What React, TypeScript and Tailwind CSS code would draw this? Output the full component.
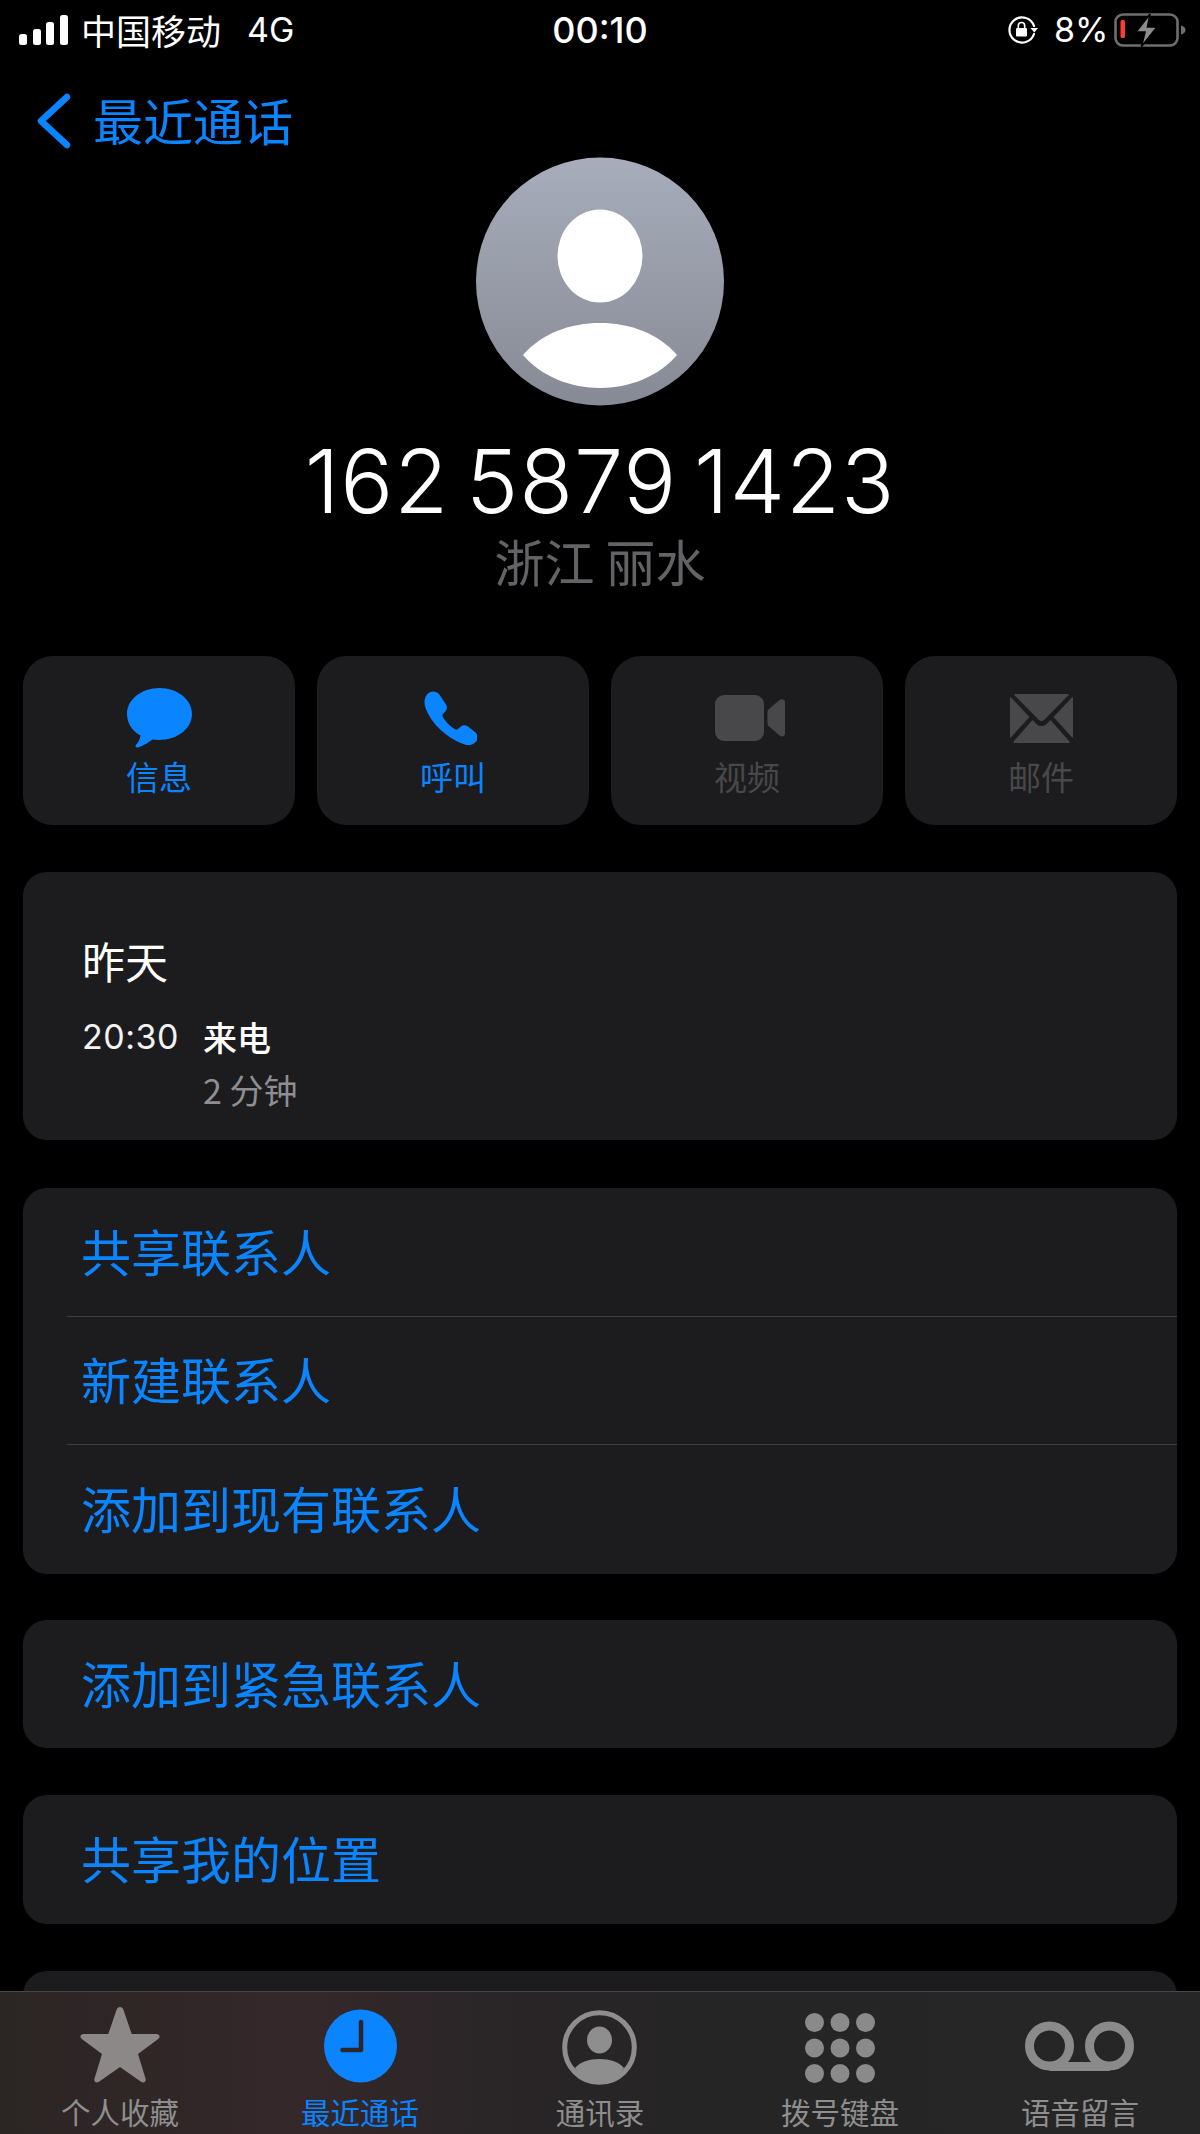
const blue = "#0a84ff";

function StatusBar() {
  return (
    <div className="h-[60px] flex items-center text-white text-[35px] font-['Noto_Sans_CJK_SC',sans-serif] font-normal">
      <div className="w-[497px] flex items-center">
        <svg className="ml-[19px]" width="51" height="32" viewBox="0 0 51 32" fill="#fff">
          <rect x="0" y="20" width="8" height="11" rx="2.5" />
          <rect x="14" y="15" width="8" height="16" rx="2.5" />
          <rect x="27" y="8" width="8" height="23" rx="2.5" />
          <rect x="41" y="1" width="8" height="30" rx="2.5" />
        </svg>
        <span className="ml-[11px] mb-[2px] leading-none">中国移动</span>
        <span className="ml-[26px] leading-none font-['Inter',sans-serif] font-normal text-[34px]">4G</span>
      </div>
      <div className="w-[206px] text-center font-['Inter',sans-serif] font-medium text-[36px] leading-none">00:10</div>
      <div className="flex-1 flex items-center">
        <svg className="ml-[304px]" width="32" height="28" viewBox="0 0 32 28" fill="none" stroke="#fff" strokeWidth="2.2">
          <path d="M27 10a12.6 12.6 0 1 0 0 8" strokeLinecap="round" />
          <path d="M23.5 12h7.5l-3.7 4.6z" fill="#fff" stroke="none" />
          <rect x="9" y="12" width="11" height="8.5" rx="1.2" fill="#fff" stroke="none" />
          <path d="M11.3 12V9.7a3.2 3.2 0 0 1 6.4 0V12" strokeWidth="1.6" />
        </svg>
        <span className="ml-[15px] font-['Inter',sans-serif] font-normal text-[34px] leading-none">8%</span>
        <svg className="ml-[6px]" width="73" height="34" viewBox="0 0 73 34">
          <rect x="1.5" y="1.5" width="62" height="31" rx="7.5" fill="none" stroke="#6e6e6e" strokeWidth="2.6" />
          <rect x="6.5" y="7" width="4.5" height="18" rx="1.5" fill="#ff3b30" />
          <path d="M67 12.5c3 .8 4.5 2.4 4.5 4.5S70 20.7 67 21.5z" fill="#6e6e6e" />
          <path d="M36 1 22 19h9l-3.5 14.5L43 14h-9.5z" fill="#8b8b8b" stroke="#000" strokeWidth="1.6" />
        </svg>
      </div>
    </div>
  );
}

function NavBar() {
  return (
    <div className="mt-[30px] h-[62px] flex items-center">
      <svg className="ml-[36px]" width="36" height="56" viewBox="0 0 36 56" fill="none" stroke={blue} strokeWidth="6.5" strokeLinecap="round" strokeLinejoin="round">
        <path d="M31 4 5 28l26 24" />
      </svg>
      <span className="ml-[21px] mb-[4px] text-[50px] leading-none font-normal text-[#0a84ff] font-['Noto_Sans_CJK_SC',sans-serif]">最近通话</span>
    </div>
  );
}

function Header() {
  return (
    <div className="flex flex-col items-center">
      <svg className="mt-[5px]" width="248" height="249" viewBox="0 0 248 249">
        <defs>
          <linearGradient id="avatar" x1="0" y1="0" x2="0" y2="1">
            <stop offset="0" stopColor="#a7adbb" />
            <stop offset="1" stopColor="#868a94" />
          </linearGradient>
        </defs>
        <circle cx="124" cy="124.5" r="124" fill="url(#avatar)" />
        <ellipse cx="124" cy="99" rx="42.5" ry="46.5" fill="#fff" />
        <path d="M47 198C66 176 95 166 124 166S182 176 201 198C182 220 153 231 124 231S66 220 47 198Z" fill="#fff" />
      </svg>
      <div className="mt-[27px] h-[96px] text-[88px] leading-[96px] font-['Inter',sans-serif] font-[350] tracking-[1px] [word-spacing:-9px] text-white">162 5879 1423</div>
      <div className="mt-[1px] text-[50px] leading-[60px] font-normal text-[#636366] font-['Noto_Sans_CJK_SC',sans-serif]">浙江 丽水</div>
    </div>
  );
}

function ActionCard({ label, on, children }: { label: string; on?: boolean; children: React.ReactNode }) {
  return (
    <div className="h-[169px] rounded-[30px] bg-[#1c1c1e] flex flex-col items-center">
      <div className="h-[100px] w-full flex items-end justify-center">{children}</div>
      <div className={`text-[33px] leading-[40px] font-normal font-['Noto_Sans_CJK_SC',sans-serif] ${on ? "text-[#0a84ff]" : "text-[#48484a]"}`}>{label}</div>
    </div>
  );
}

function Actions() {
  return (
    <div className="mt-[66px] mx-[23px] grid grid-cols-4 gap-[22px]">
      <ActionCard label="信息" on>
        <svg width="65" height="60" viewBox="0 0 65 60" fill={blue} className="mb-[8px]">
          <path d="M32.5 0C50.5 0 65 11.5 65 26S50.5 52 32 52c-2.500 0-4.500-.2-6.500-.5C20 55.500 14 59 10.500 59.500c-2 .2-2.500-1.500-1.500-2.700 2.500-2.800 4-5.800 4.500-9.300C5 43 0 35 0 26 0 11.500 14.500 0 32.500 0Z" />
        </svg>
      </ActionCard>
      <ActionCard label="呼叫" on>
        <svg width="53" height="54" viewBox="0 0 53 54" fill={blue} className="mb-[11px] mr-[5px]">
          <path d="M3 3.500C6-.5 12-.500 15 3l7 10.500c1.500 2.500 1.200 5-.8 7l-2.200 2.500c-.8 1-.8 2 0 3.200 3.500 5.300 6.500 8.500 12 12 1.200.8 2.200.6 3-.2l2.800-2.500c2-1.700 4.300-1.800 6.500-.4l7.700 6c3 2.300 3.500 6.500.8 9.700-3 3.700-7.500 4-12 2.400C22 46.500 7.500 33 1.500 17 0 12 0 7.500 3 3.500Z" />
        </svg>
      </ActionCard>
      <ActionCard label="视频">
        <svg width="70" height="46" viewBox="0 0 70 46" fill="#48484a" className="mb-[15px] ml-[5px]">
          <rect x="0" y="0" width="49" height="46" rx="9" />
          <path d="M52.500 17c0-1 .4-1.800 1-2.400L64.500 5c2-1.500 5.500-.8 5.500 2v31.500c0 3-3.500 3.700-5.500 2L53.500 31c-.6-.6-1-1.400-1-2.400Z" />
        </svg>
      </ActionCard>
      <ActionCard label="邮件">
        <svg width="63" height="49" viewBox="0 0 63 49" fill="#48484a" className="mb-[13px]">
          <path d="M5 0h53c.8 0 1 .6.5 1.200L34 26c-1.500 1.500-3.500 1.500-5 0L4.500 1.200C4 .6 4.200 0 5 0Z" />
          <path d="M0 4c0-.8.6-1 1.100-.5L19.500 23 .8 43.500c-.4.400-.8.200-.8-.5Z" />
          <path d="M63 4c0-.8-.6-1-1.100-.5L43.500 23l18.700 20.500c.4.400.8.200.8-.5Z" />
          <path d="M22.500 26 27 30.500c2.500 2 6.500 2 9 0l4.500-4.500L59.500 47.500c.4.600.2 1.500-1 1.500H4.500c-1.200 0-1.400-.9-1-1.500Z" />
        </svg>
      </ActionCard>
    </div>
  );
}

function Card({ children, className = "" }: { children: React.ReactNode; className?: string }) {
  return <div className={`mx-[23px] rounded-[24px] bg-[#1c1c1e] overflow-hidden ${className}`}>{children}</div>;
}

function LinkRow({ label, line }: { label: string; line?: boolean }) {
  return (
    <div className="h-[128.500px] flex flex-col">
      <div className="flex-1 flex items-center pl-[58px] pb-[4px] text-[50px] leading-none font-normal text-[#0a84ff] font-['Noto_Sans_CJK_SC',sans-serif]">{label}</div>
      {line && <div className="ml-[44px] h-px bg-[#3d3d40]" />}
    </div>
  );
}

function CallCard() {
  return (
    <Card className="mt-[47px] h-[268px] pl-[59px] pt-[61px] text-white font-['Noto_Sans_CJK_SC',sans-serif]">
      <div className="text-[43px] leading-[54px] font-normal">昨天</div>
      <div className="mt-[26px] flex">
        <div className="w-[121px] text-[34px] leading-[48px] tracking-[0.5px] font-['Inter',sans-serif] font-normal text-[#f2f2f2]">20:30</div>
        <div className="flex flex-col">
          <div className="text-[34px] leading-[48px] font-medium">来电</div>
          <div className="mt-[5px] text-[34px] leading-[48px] font-normal text-[#8e8e93]">2 分钟</div>
        </div>
      </div>
    </Card>
  );
}

function Tab({ label, active, children }: { label: string; active?: boolean; children: React.ReactNode }) {
  return (
    <div className="flex flex-col items-center">
      <div className="h-[96px] w-full flex items-end justify-center">{children}</div>
      <div className={`mt-[3px] text-[29.500px] leading-[40px] font-['Noto_Sans_CJK_SC',sans-serif] font-normal ${active ? "text-[#0a84ff]" : "text-[#8e8e8e]"}`}>{label}</div>
    </div>
  );
}

function TabBar() {
  return (
    <div className="h-[143px] border-t border-[#47474a] grid grid-cols-5 bg-[linear-gradient(90deg,#2b2524_0%,#35282a_25%,#2a2527_40%,#252525_60%,#262626_100%)]">
      <Tab label="个人收藏">
        <svg width="80" height="76" viewBox="0 0 80 76" fill="#8c8888" className="mb-[5px]">
          <path d="M40 0c2 0 3 1.500 3.700 3.500l8 23.500h24.500c3.500 0 4.500 2.800 2 5L58 47l7.500 24.500c1 3.500-1.800 5-4.500 3.200L40 60 19 74.700c-2.700 1.800-5.500.3-4.500-3.200L22 47 1.800 32c-2.500-2.200-1.500-5 2-5h24.500l8-23.500C37 1.500 38 0 40 0Z" />
        </svg>
      </Tab>
      <Tab label="最近通话" active>
        <svg width="73" height="74" viewBox="0 0 73 74" fill="none" className="mb-[5px]">
          <circle cx="36.500" cy="37" r="36.500" fill={blue} />
          <path d="M37 13v28H18.500" stroke="#2b2627" strokeWidth="4.500" strokeLinecap="round" strokeLinejoin="round" />
        </svg>
      </Tab>
      <Tab label="通讯录">
        <svg width="75" height="75" viewBox="0 0 75 75" className="mb-[3px] mr-[2px]">
          <circle cx="37.500" cy="37.500" r="34.800" fill="none" stroke="#8e8e8e" strokeWidth="5" />
          <ellipse cx="37.500" cy="30" rx="12.500" ry="13.500" fill="#8e8e8e" />
          <path d="M13 58C18 52 27 49 37.500 49S57 52 62 58C56 68 46 72 37.500 72S19 68 13 58Z" fill="#8e8e8e" />
        </svg>
      </Tab>
      <Tab label="拨号键盘">
        <svg width="70" height="70" viewBox="0 0 70 70" fill="#8a8a8a" className="mb-[5px]">
          {[9.500, 35, 60.500].flatMap((cx) =>
            [9.500, 35, 60.500].map((cy) => <circle key={`${cx}-${cy}`} cx={cx} cy={cy} r="9.500" />),
          )}
        </svg>
      </Tab>
      <Tab label="语音留言">
        <svg width="109" height="50" viewBox="0 0 109 50" fill="none" stroke="#8a8a8a" strokeWidth="9" className="mb-[17px] mr-[2px]">
          <circle cx="24.500" cy="25" r="20" />
          <circle cx="84.500" cy="25" r="20" />
          <path d="M24.500 45.500h60" />
        </svg>
      </Tab>
    </div>
  );
}

export default function App() {
  return (
    <div className="w-[1200px] h-[2134px] bg-black flex flex-col overflow-hidden">
      <div className="h-[1991px] overflow-hidden shrink-0">
        <StatusBar />
        <NavBar />
        <Header />
        <Actions />
        <CallCard />
        <Card className="mt-[48px]">
          <LinkRow label="共享联系人" line />
          <LinkRow label="新建联系人" line />
          <LinkRow label="添加到现有联系人" />
        </Card>
        <Card className="mt-[46px]"><LinkRow label="添加到紧急联系人" /></Card>
        <Card className="mt-[47px]"><LinkRow label="共享我的位置" /></Card>
        <Card className="mt-[47px] h-[140px]"><div /></Card>
      </div>
      <TabBar />
    </div>
  );
}
